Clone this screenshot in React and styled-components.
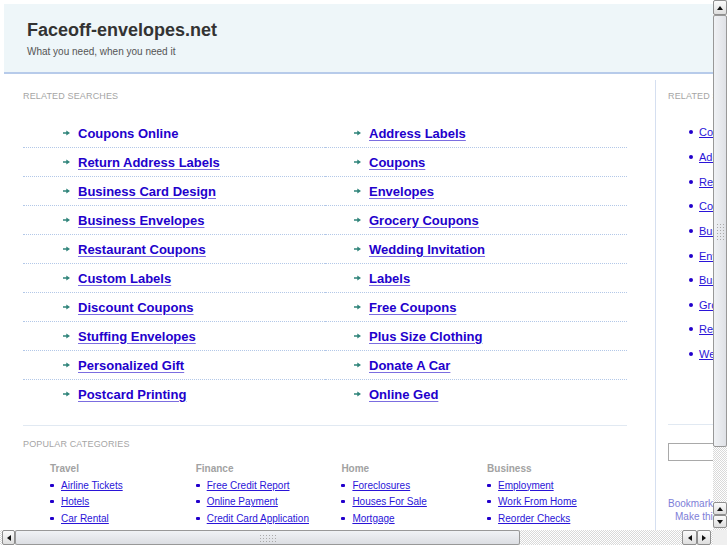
import React from "react";
import styled, { createGlobalStyle } from "styled-components";

const GlobalStyle = createGlobalStyle`
  html, body {
    margin: 0;
    padding: 0;
    overflow: hidden;
    background: #fff;
  }
  body {
    font-family: "Liberation Sans", Arial, sans-serif;
  }
  ul {
    list-style: none;
    margin: 0;
    padding: 0;
  }
`;

const Frame = styled.div`
  width: 727px;
  height: 545px;
  display: grid;
  grid-template-columns: 713px 14px;
  grid-template-rows: 530px 15px;
`;

const Viewport = styled.div`
  overflow: hidden;
  padding: 4px 0 0 4px;
  box-sizing: border-box;
  background: #fff;
`;

const Page = styled.div`
  width: 920px;
`;

const Header = styled.header`
  height: 70px;
  box-sizing: border-box;
  background: #eef6f9;
  border-bottom: 2px solid #b7cbea;
  padding: 16px 0 0 23px;
`;

const SiteName = styled.h1`
  margin: 0;
  font-size: 18px;
  line-height: 20px;
  font-weight: bold;
  color: #333;
`;

const Tagline = styled.p`
  margin: 6px 0 0;
  font-size: 10px;
  line-height: 12px;
  color: #555;
`;

const Main = styled.div`
  display: flex;
  margin-top: 6px;
`;

const Content = styled.div`
  width: 604px;
  margin-left: 19px;
  padding-top: 10px;
`;

const SectionTitle = styled.h2`
  margin: 0;
  font-size: 9px;
  line-height: 12px;
  font-weight: normal;
  letter-spacing: 0.15px;
  text-transform: uppercase;
  color: #a5a5a5;
`;

const Searches = styled.div`
  display: grid;
  grid-template-columns: 302px 302px;
  margin: 17px 0;
`;

const SearchColumn = styled.ul``;

const SearchRow = styled.li`
  display: flex;
  align-items: center;
  gap: 8px;
  height: 28px;
  padding-left: ${(p) => p.$indent}px;
  border-bottom: 1px dotted #b3c8e8;

  &:last-child {
    border-bottom: none;
  }
`;

const SearchLink = styled.a`
  color: #2200cc;
  font-size: 13px;
  font-weight: bold;
  text-decoration: ${(p) => (p.$hover ? "none" : "underline")};
  text-decoration-color: #7b6de0;
  text-underline-offset: 2px;
  cursor: pointer;
`;

const Rule = styled.div`
  border-top: 1px solid #e1e9f2;
`;

const Popular = styled.div`
  padding-top: 12px;
`;

const Categories = styled.div`
  display: grid;
  grid-template-columns: repeat(4, 145.7px);
  margin-top: 11px;
  padding-left: 27px;
`;

const CategoryHeading = styled.h3`
  margin: 0;
  font-size: 10px;
  line-height: 16px;
  font-weight: bold;
  color: #a2a2a2;
`;

const CategoryItem = styled.li`
  display: flex;
  align-items: center;
  gap: 7px;
  height: 16.5px;
`;

const Square = styled.span`
  width: 4px;
  height: 3px;
  border-radius: 1px;
  background: #2200cc;
`;

const SmallLink = styled.a`
  color: #2a14d8;
  font-size: ${(p) => p.$size || 10}px;
  text-decoration: underline;
  text-underline-offset: 1px;
  white-space: nowrap;
  cursor: pointer;
`;

const Sidebar = styled.aside`
  width: 240px;
  margin-left: 28px;
  padding: 10px 0 0 12px;
  border-left: 1px solid #d5dff0;
  min-height: 460px;
`;

const SideList = styled.ul`
  margin-top: 18px;
  padding-left: 21px;
`;

const SideItem = styled.li`
  display: flex;
  align-items: center;
  gap: 6px;
  height: 24.65px;
`;

const Dot = styled.span`
  width: 4px;
  height: 4px;
  border-radius: 50%;
  background: #2200cc;
`;

const SideRule = styled(Rule)`
  margin-top: 58px;
`;

const SearchBox = styled.input`
  display: block;
  margin-top: 18px;
  width: 160px;
  height: 18px;
  box-sizing: border-box;
  border: 1px solid #a9a9a9;
  background: #fff;
`;

const Bookmark = styled.div`
  margin-top: 36px;
  font-size: 10px;
  line-height: 13px;
`;

const BookmarkLink = styled.a`
  display: block;
  color: #7e7ed8;
  padding-left: ${(p) => p.$indent || 0}px;
  text-decoration: none;
  white-space: nowrap;
`;

/* fake browser scrollbars */

const VScroll = styled.div`
  display: flex;
  flex-direction: column;
  background-color: #fff;
  background-image: repeating-conic-gradient(#d9d9d9 0 25%, #fff 0 50%);
  background-size: 2px 2px;
`;

const HScroll = styled.div`
  display: flex;
  padding-left: 2px;
  background-color: #fff;
  background-image: repeating-conic-gradient(#d9d9d9 0 25%, #fff 0 50%);
  background-size: 2px 2px;
`;

const Corner = styled.div`
  background: #efefef;
`;

const ArrowButton = styled.div`
  flex: 0 0 ${(p) => p.$size}px;
  display: flex;
  align-items: center;
  justify-content: center;
  box-sizing: border-box;
  border: 1px solid #8f8f8f;
  border-radius: 2px;
  background: linear-gradient(#fbfbfb, #dedede);
`;

const triangles = {
  up: "border-left: 3px solid transparent; border-right: 3px solid transparent; border-bottom: 4px solid #111;",
  down: "border-left: 3px solid transparent; border-right: 3px solid transparent; border-top: 4px solid #111;",
  left: "border-top: 3px solid transparent; border-bottom: 3px solid transparent; border-right: 4px solid #111;",
  right: "border-top: 3px solid transparent; border-bottom: 3px solid transparent; border-left: 4px solid #111;",
};

const Triangle = styled.span`
  width: 0;
  height: 0;
  ${(p) => triangles[p.$dir]}
`;

const Thumb = styled.div`
  flex: 0 0 ${(p) => p.$size}px;
  display: flex;
  align-items: center;
  justify-content: center;
  box-sizing: border-box;
  border: 1px solid #989898;
  border-radius: 2px;
  background: ${(p) =>
    p.$vertical
      ? "linear-gradient(to right, #f0f2f5, #dfe1e6)"
      : "linear-gradient(#f0f2f5, #dcdee3)"};
`;

const Grip = styled.span`
  width: ${(p) => (p.$vertical ? 8 : 18)}px;
  height: ${(p) => (p.$vertical ? 17 : 8)}px;
  background-image: radial-gradient(circle, #a9a9a9 0.7px, transparent 0.9px);
  background-size: 3px 3px;
`;

const Spacer = styled.div`
  flex: 1;
`;

const Gap = styled.div`
  flex: 0 0 ${(p) => p.$size}px;
`;

const ArrowBullet = () => (
  <svg width="7" height="6" viewBox="0 0 7 6">
    <path d="M0 2.3h3.3V0.4L7 3 3.3 5.6V3.7H0z" fill="#2f847a" />
  </svg>
);

const leftSearches = [
  "Coupons Online",
  "Return Address Labels",
  "Business Card Design",
  "Business Envelopes",
  "Restaurant Coupons",
  "Custom Labels",
  "Discount Coupons",
  "Stuffing Envelopes",
  "Personalized Gift",
  "Postcard Printing",
];

const rightSearches = [
  "Address Labels",
  "Coupons",
  "Envelopes",
  "Grocery Coupons",
  "Wedding Invitation",
  "Labels",
  "Free Coupons",
  "Plus Size Clothing",
  "Donate A Car",
  "Online Ged",
];

const sideSearches = [
  "Coupons Online",
  "Address Labels",
  "Return Address Labels",
  "Coupons",
  "Business Card Design",
  "Envelopes",
  "Business Envelopes",
  "Grocery Coupons",
  "Restaurant Coupons",
  "Wedding Invitation",
];

const categories = [
  { title: "Travel", links: ["Airline Tickets", "Hotels", "Car Rental"] },
  { title: "Finance", links: ["Free Credit Report", "Online Payment", "Credit Card Application"] },
  { title: "Home", links: ["Foreclosures", "Houses For Sale", "Mortgage"] },
  { title: "Business", links: ["Employment", "Work From Home", "Reorder Checks"] },
];

const App = () => {
  return (
    <>
      <GlobalStyle />
      <Frame>
        <Viewport>
          <Page>
            <Header>
              <SiteName>Faceoff-envelopes.net</SiteName>
              <Tagline>What you need, when you need it</Tagline>
            </Header>

            <Main>
              <Content>
                <SectionTitle>Related Searches</SectionTitle>
                <Searches>
                  <SearchColumn>
                    {leftSearches.map((s, i) => (
                      <SearchRow key={s} $indent={40}>
                        <ArrowBullet />
                        <SearchLink $hover={i === 0}>{s}</SearchLink>
                      </SearchRow>
                    ))}
                  </SearchColumn>
                  <SearchColumn>
                    {rightSearches.map((s) => (
                      <SearchRow key={s} $indent={29}>
                        <ArrowBullet />
                        <SearchLink>{s}</SearchLink>
                      </SearchRow>
                    ))}
                  </SearchColumn>
                </Searches>
                <Rule />
                <Popular>
                  <SectionTitle>Popular Categories</SectionTitle>
                  <Categories>
                    {categories.map((c) => (
                      <div key={c.title}>
                        <CategoryHeading>{c.title}</CategoryHeading>
                        <ul>
                          {c.links.map((l) => (
                            <CategoryItem key={l}>
                              <Square />
                              <SmallLink>{l}</SmallLink>
                            </CategoryItem>
                          ))}
                        </ul>
                      </div>
                    ))}
                  </Categories>
                </Popular>
              </Content>

              <Sidebar>
                <SectionTitle>Related Searches</SectionTitle>
                <SideList>
                  {sideSearches.map((s) => (
                    <SideItem key={s}>
                      <Dot />
                      <SmallLink $size={11}>{s}</SmallLink>
                    </SideItem>
                  ))}
                </SideList>
                <SideRule />
                <SearchBox type="text" />
                <Bookmark>
                  <BookmarkLink>Bookmark this page</BookmarkLink>
                  <BookmarkLink $indent={7}>Make this your homepage</BookmarkLink>
                </Bookmark>
              </Sidebar>
            </Main>
          </Page>
        </Viewport>

        <VScroll>
          <ArrowButton $size={15}>
            <Triangle $dir="up" />
          </ArrowButton>
          <Thumb $size={432} $vertical>
            <Grip $vertical />
          </Thumb>
          <Spacer />
          <ArrowButton $size={13}>
            <Triangle $dir="up" />
          </ArrowButton>
          <ArrowButton $size={13}>
            <Triangle $dir="down" />
          </ArrowButton>
          <Gap $size={2} />
        </VScroll>

        <HScroll>
          <ArrowButton $size={13}>
            <Triangle $dir="left" />
          </ArrowButton>
          <Thumb $size={505}>
            <Grip />
          </Thumb>
          <Spacer />
          <ArrowButton $size={15}>
            <Triangle $dir="left" />
          </ArrowButton>
          <ArrowButton $size={14}>
            <Triangle $dir="right" />
          </ArrowButton>
          <Gap $size={2} />
        </HScroll>
        <Corner />
      </Frame>
    </>
  );
};

export default App;
